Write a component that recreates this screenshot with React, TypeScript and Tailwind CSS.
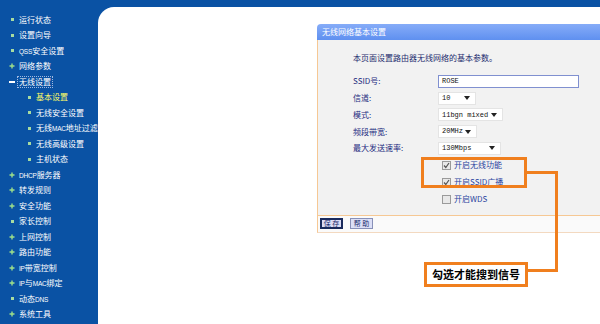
import React from "react";

type NavItem = {
  t: string;
  mark?: "dot" | "plus" | "minus";
  sub?: boolean;
  active?: boolean;
  focus?: boolean;
};

const nav: NavItem[] = [
  { t: "运行状态", mark: "dot" },
  { t: "设置向导", mark: "dot" },
  { t: "QSS安全设置", mark: "dot" },
  { t: "网络参数", mark: "plus" },
  { t: "无线设置", mark: "minus", focus: true },
  { t: "基本设置", sub: true, active: true },
  { t: "无线安全设置", sub: true },
  { t: "无线MAC地址过滤", sub: true },
  { t: "无线高级设置", sub: true },
  { t: "主机状态", sub: true },
  { t: "DHCP服务器", mark: "plus" },
  { t: "转发规则", mark: "plus" },
  { t: "安全功能", mark: "plus" },
  { t: "家长控制", mark: "dot" },
  { t: "上网控制", mark: "plus" },
  { t: "路由功能", mark: "plus" },
  { t: "IP带宽控制", mark: "plus" },
  { t: "IP与MAC绑定", mark: "plus" },
  { t: "动态DNS", mark: "dot" },
  { t: "系统工具", mark: "plus" },
];

function Mixed({ text }: { text: string }) {
  return (
    <>
      {text.split(/([A-Za-z0-9]+)/).map((part, i) =>
        /^[A-Za-z0-9]+$/.test(part) ? (
          <span key={i} className="font-['Liberation_Sans',sans-serif] text-[6.5px] tracking-[-0.2px]">
            {part}
          </span>
        ) : (
          part
        ),
      )}
    </>
  );
}

function Marker({ mark }: { mark?: NavItem["mark"] }) {
  if (mark === "plus")
    return (
      <svg width="6" height="6" viewBox="0 0 6 6" className="shrink-0">
        <path d="M3 0.5v5M0.5 3h5" stroke="#9ee08a" strokeWidth="1.4" />
      </svg>
    );
  if (mark === "minus")
    return <span className="block h-[1.5px] w-[6px] shrink-0 bg-white" />;
  return <span className="mx-[1.5px] block h-[3px] w-[3px] shrink-0 bg-[#a8dca0]" />;
}

function Sidebar() {
  return (
    <div className="w-[98px] shrink-0 pt-[12px]">
      {nav.map((n) => (
        <div
          key={n.t}
          className={`flex h-[15.5px] items-center gap-[4px] ${n.sub ? "pl-[26px]" : "pl-[9px]"}`}
        >
          <Marker mark={n.sub ? "dot" : n.mark} />
          <span
            className={`whitespace-nowrap text-[8px] leading-none ${
              n.active ? "text-[#ffff66]" : "text-white"
            } ${n.focus ? "outline outline-1 outline-dotted outline-[#9fb8e0] outline-offset-1" : ""}`}
          >
            <Mixed text={n.t} />
          </span>
        </div>
      ))}
    </div>
  );
}

function Caret() {
  return (
    <svg width="6" height="4" viewBox="0 0 6 4" className="shrink-0">
      <path d="M0 0h6L3 4z" fill="#222" />
    </svg>
  );
}

function Select({ value, w }: { value: string; w: string }) {
  return (
    <div
      className={`flex h-[13px] shrink-0 items-center justify-between border border-[#e4e4e4] bg-white pl-[3px] pr-[5px] ${w}`}
    >
      <span className="whitespace-nowrap font-['Liberation_Mono',monospace] text-[7px] text-[#111]">
        {value}
      </span>
      <Caret />
    </div>
  );
}

function Check({ on, label }: { on: boolean; label: string }) {
  return (
    <div className="flex h-[17px] items-center gap-[3px] pl-[124px]">
      <span className="flex h-[9px] w-[9px] items-center justify-center border border-[#9a9a9a] bg-[#e8e8e8]">
        {on && (
          <svg width="7" height="7" viewBox="0 0 7 7">
            <path d="M1 3.5l1.8 2L6 1" stroke="#555" strokeWidth="1.2" fill="none" />
          </svg>
        )}
      </span>
      <span className="text-[8px] leading-none text-[#2a44a0]">{label}</span>
    </div>
  );
}

const rows: { label: string; control: React.ReactNode }[] = [
  {
    label: "SSID号:",
    control: (
      <div className="flex h-[13px] w-[141px] shrink-0 items-center border border-[#8090d0] bg-white pl-[3px]">
        <span className="font-['Liberation_Mono',monospace] text-[7px] text-[#111]">ROSE</span>
      </div>
    ),
  },
  { label: "信道:", control: <Select value="10" w="w-[38px]" /> },
  { label: "模式:", control: <Select value="11bgn mixed" w="w-[65px]" /> },
  { label: "频段带宽:", control: <Select value="20MHz" w="w-[39px]" /> },
  { label: "最大发送速率:", control: <Select value="130Mbps" w="w-[63px]" /> },
];

function Panel() {
  return (
    <div className="ml-[219px] mt-[17px] w-[300px]">
      <div className="flex h-[16px] items-center rounded-tl-[4px] bg-gradient-to-b from-[#86acf8] to-[#5f90f0] pl-[5px]">
        <span className="text-[8px] leading-none text-white">无线网络基本设置</span>
      </div>
      <div className="border-l border-[#f6c894] bg-[#f2f2f2] pb-[7px]">
        <div className="flex h-[22px] items-end pl-[35px] text-[8px] leading-none text-[#1d2b6e]">
          本页面设置路由器无线网络的基本参数。
        </div>
        <div className="mt-[11px]">
          {rows.map((r) => (
            <div key={r.label} className="flex h-[16.75px] items-center pl-[35px]">
              <span className="w-[85px] shrink-0 text-[8px] leading-none text-[#1d2b80]">{r.label}</span>
              {r.control}
            </div>
          ))}
        </div>
        <div>
          <Check on label="开启无线功能" />
          <Check on label="开启SSID广播" />
          <Check on={false} label="开启WDS" />
        </div>
      </div>
      <div className="flex h-[18px] items-center gap-[7px] border-b border-l border-t border-[#f6c894] border-b-[#f3d9c0] bg-[#fafafa] pl-[2px]">
        <span className="flex h-[11px] w-[23px] items-center justify-center whitespace-nowrap border-2 border-[#1a2a5c] bg-[#dcdcf4] text-[7px] leading-none text-[#1a2a6c]">
          保 存
        </span>
        <span className="flex h-[11px] w-[23px] items-center justify-center whitespace-nowrap border border-[#8890b8] bg-[#dcdff6] text-[7px] leading-none text-[#1a2a6c]">
          帮 助
        </span>
      </div>
    </div>
  );
}

function Callout() {
  const o = "bg-[#f07f1e]";
  return (
    <>
      <div className="absolute left-[421px] top-[157px] h-[31px] w-[106px] border-[3px] border-[#f07f1e]" />
      <div className={`absolute left-[527px] top-[171px] h-[3px] w-[31px] ${o}`} />
      <div className={`absolute left-[555px] top-[171px] h-[101px] w-[3px] ${o}`} />
      <div className={`absolute left-[527px] top-[269px] h-[3px] w-[31px] ${o}`} />
      <div className="absolute left-[424px] top-[262px] flex h-[25px] w-[104px] items-center justify-center border-[3px] border-[#f07f1e] bg-white">
        <span className="text-[11px] font-bold leading-none text-black">勾选才能搜到信号</span>
      </div>
    </>
  );
}

export default function App() {
  return (
    <div className="relative flex h-[324px] w-[600px] overflow-hidden bg-[#0a52a4] font-['Noto_Sans_CJK_SC',sans-serif]">
      <Sidebar />
      <div className="mt-[7px] flex-1 rounded-tl-[16px] bg-white">
        <Panel />
      </div>
      <Callout />
    </div>
  );
}
